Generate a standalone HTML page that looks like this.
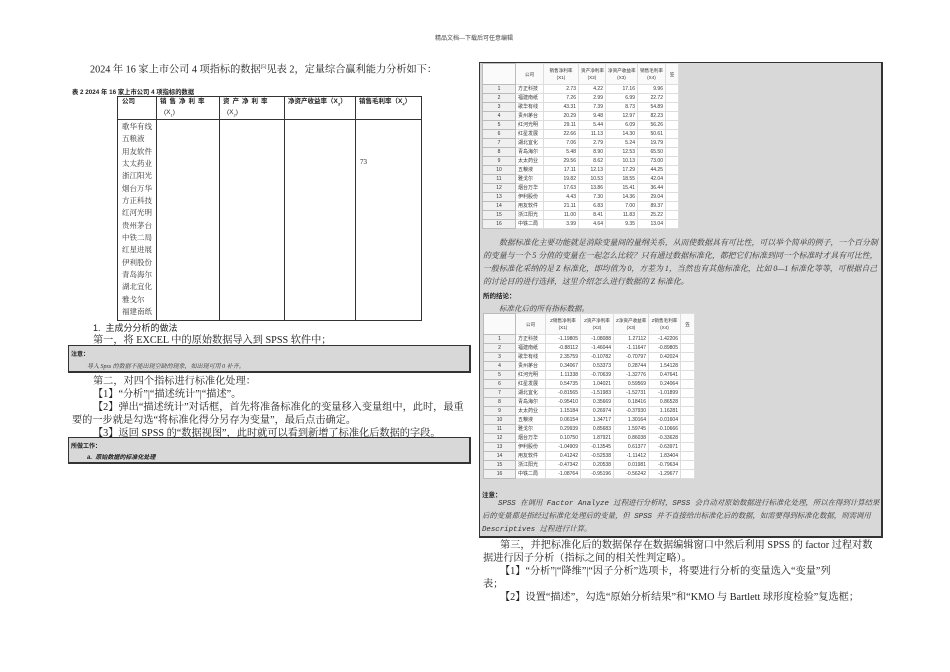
<!DOCTYPE html>
<html><head><meta charset="utf-8">
<style>
*{margin:0;padding:0;box-sizing:border-box}
body{width:950px;height:672px;background:#fff;position:relative;overflow:hidden;font-family:"Liberation Serif","Noto Serif CJK SC",serif;color:#222}
.a{position:absolute;white-space:nowrap}
.t{font-size:10.2px;line-height:13px}
.s{font-family:"Liberation Sans","Noto Sans CJK SC",sans-serif}
.vl{position:absolute;width:1px;background:#333}
.hd{position:absolute;font-family:"Liberation Sans","Noto Sans CJK SC",sans-serif;font-size:6.5px;font-weight:bold;line-height:12px;white-space:nowrap}
.box{position:absolute;background:#d8d8d8;border:1px solid #333;border-right:2px solid #333;border-bottom:2px solid #333}
.sp{position:absolute;background:#fff;font-family:"Liberation Sans","Noto Sans CJK SC",sans-serif;font-size:5px;color:#333}
.sp table{border-collapse:collapse;table-layout:fixed;width:100%}
.sp td{border:1px solid #ddd;height:9px;line-height:7px;padding:0 2px;text-align:right;white-space:nowrap;overflow:hidden}
.sp td.i{background:#f0f0f0;text-align:center;border-color:#bbb}
.sp td.c{text-align:left}
.sp tr.h td{height:21px;text-align:center;background:#fafafa;line-height:7px;font-size:4.6px}
.it{font-style:italic}
</style></head><body>
<div class="a s" style="left:435px;top:33px;font-size:6px;color:#444">精品文档---下载后可任意编辑</div>

<div class="a t" style="left:90px;top:61px">2024 年 16 家上市公司 4 项指标的数据<sup style="font-size:5px">[5]</sup>见表 2，定量综合赢利能力分析如下：</div>
<div class="a s" style="left:72px;top:87px;font-size:6.3px;font-weight:bold">表 2  2024 年 16 家上市公司 4 项指标的数据</div>

<div style="position:absolute;left:117px;top:96px;width:305px;height:225px;border:1px solid #333"></div>
<div style="position:absolute;left:117px;top:119px;width:305px;height:1px;background:#333"></div>
<div class="vl" style="left:156px;top:96px;height:225px"></div>
<div class="vl" style="left:219px;top:96px;height:225px"></div>
<div class="vl" style="left:284px;top:96px;height:225px"></div>
<div class="vl" style="left:355px;top:96px;height:225px"></div>
<div class="hd" style="left:122px;top:96px">公司</div>
<div class="hd" style="left:160px;top:96px;letter-spacing:3px">销售净利率</div>
<div class="hd" style="left:164px;top:107px;font-weight:normal">(X<sub style="font-size:4px">1</sub>)</div>
<div class="hd" style="left:223px;top:96px;letter-spacing:3px">资产净利率</div>
<div class="hd" style="left:227px;top:107px;font-weight:normal">(X<sub style="font-size:4px">2</sub>)</div>
<div class="hd" style="left:288px;top:96px">净资产收益率（X<sub style="font-size:4px">3</sub>）</div>
<div class="hd" style="left:359px;top:96px">销售毛利率（X<sub style="font-size:4px">4</sub>）</div>
<div class="a" style="left:122px;top:121px;font-size:7.5px;line-height:12.35px;color:#333">歌华有线<br>五粮液<br>用友软件<br>太太药业<br>浙江阳光<br>烟台万华<br>方正科技<br>红河光明<br>贵州茅台<br>中铁二局<br>红星进展<br>伊利股份<br>青岛海尔<br>湖北宜化<br>雅戈尔<br>福建南纸</div>
<div class="a" style="left:360px;top:158px;font-size:7px">73</div>

<div class="a s" style="left:93px;top:321px;font-size:9px">1.&nbsp; 主成分分析的做法</div>
<div class="a t" style="left:93px;top:334px">第一，将 EXCEL 中的原始数据导入到 SPSS 软件中；</div>
<div class="box" style="left:68px;top:345px;width:403px;height:28px"><div class="a s" style="left:2px;top:3px;font-size:6px;font-weight:bold">注意：</div><div class="a it" style="left:18px;top:15px;font-size:6px;color:#333">导入 Spss 的数据不能出现空缺的现象，如出现可用 0 补齐。</div></div>
<div class="a t" style="left:93px;top:375px">第二，对四个指标进行标准化处理：</div>
<div class="a t" style="left:93px;top:388px">【1】“分析”|“描述统计”|“描述”。</div>
<div class="a t" style="left:93px;top:401px">【2】弹出“描述统计”对话框，首先将准备标准化的变量移入变量组中，此时，最重</div>
<div class="a t" style="left:72px;top:414px">要的一步就是勾选“将标准化得分另存为变量”，最后点击确定。</div>
<div class="a t" style="left:93px;top:427px">【3】返回 SPSS 的“数据视图”，此时就可以看到新增了标准化后数据的字段。</div>
<div class="box" style="left:68px;top:437px;width:403px;height:27px"><div class="a s" style="left:2px;top:3px;font-size:6px;font-weight:bold">所做工作：</div><div class="a s it" style="left:18px;top:14px;font-size:6px;font-weight:bold">a.&nbsp; 原始数据的标准化处理</div></div>

<div class="box" style="left:479px;top:62px;width:404px;height:476px"></div>
<div class="sp" style="left:482px;top:63px;width:197px">
<table>
<col style="width:33px"><col style="width:28px"><col style="width:35px"><col style="width:27px"><col style="width:32px"><col style="width:28px"><col>
<tr class="h"><td class="i"></td><td>公司</td><td>销售净利率<br>(X1)</td><td>资产净利率<br>(X2)</td><td>净资产收益率<br>(X3)</td><td>销售毛利率<br>(X4)</td><td>笠</td></tr>
<tr><td class="i">1</td><td class="c">方正科技</td><td>2.73</td><td>4.22</td><td>17.16</td><td>9.96</td><td></td></tr>
<tr><td class="i">2</td><td class="c">福建南纸</td><td>7.26</td><td>2.99</td><td>6.99</td><td>22.72</td><td></td></tr>
<tr><td class="i">3</td><td class="c">歌华有线</td><td>43.31</td><td>7.39</td><td>8.73</td><td>54.89</td><td></td></tr>
<tr><td class="i">4</td><td class="c">贵州茅台</td><td>20.29</td><td>9.48</td><td>12.97</td><td>82.23</td><td></td></tr>
<tr><td class="i">5</td><td class="c">红河光明</td><td>29.11</td><td>5.44</td><td>6.09</td><td>56.26</td><td></td></tr>
<tr><td class="i">6</td><td class="c">红星发展</td><td>22.66</td><td>11.13</td><td>14.30</td><td>50.61</td><td></td></tr>
<tr><td class="i">7</td><td class="c">湖北宜化</td><td>7.06</td><td>2.79</td><td>5.24</td><td>19.79</td><td></td></tr>
<tr><td class="i">8</td><td class="c">青岛海尔</td><td>5.48</td><td>8.90</td><td>12.53</td><td>65.50</td><td></td></tr>
<tr><td class="i">9</td><td class="c">太太药业</td><td>29.56</td><td>8.62</td><td>10.13</td><td>73.00</td><td></td></tr>
<tr><td class="i">10</td><td class="c">五粮液</td><td>17.11</td><td>12.13</td><td>17.29</td><td>44.25</td><td></td></tr>
<tr><td class="i">11</td><td class="c">雅戈尔</td><td>19.82</td><td>10.53</td><td>18.55</td><td>42.04</td><td></td></tr>
<tr><td class="i">12</td><td class="c">烟台万华</td><td>17.63</td><td>13.86</td><td>15.41</td><td>36.44</td><td></td></tr>
<tr><td class="i">13</td><td class="c">伊利股份</td><td>4.43</td><td>7.30</td><td>14.36</td><td>29.04</td><td></td></tr>
<tr><td class="i">14</td><td class="c">用友软件</td><td>21.11</td><td>6.83</td><td>7.00</td><td>89.37</td><td></td></tr>
<tr><td class="i">15</td><td class="c">浙江阳光</td><td>11.00</td><td>8.41</td><td>11.83</td><td>25.22</td><td></td></tr>
<tr><td class="i">16</td><td class="c">中铁二局</td><td>3.99</td><td>4.64</td><td>9.35</td><td>13.04</td><td></td></tr>
</table></div>

<div class="a it" style="left:483px;top:236px;width:396px;white-space:normal;font-size:7.9px;line-height:13px;color:#333;text-indent:16px">数据标准化主要功能就是消除变量间的量纲关系，从而使数据具有可比性，可以举个简单的例子，一个百分制的变量与一个 5 分值的变量在一起怎么比较？只有通过数据标准化，都把它们标准到同一个标准时才具有可比性，一般标准化采纳的是 Z 标准化，即均值为 0，方差为 1，当然也有其他标准化，比如 0—1 标准化等等，可根据自己的讨论目的进行选择，这里介绍怎么进行数据的 Z 标准化。</div>
<div class="a s" style="left:483px;top:290px;font-size:6.5px;font-weight:bold">所的结论：</div>
<div class="a it" style="left:499px;top:303px;font-size:7.5px;color:#333">标准化后的所有指标数据。</div>
<div class="sp" style="left:483px;top:313px;width:212px">
<table>
<col style="width:32px"><col style="width:30px"><col style="width:35px"><col style="width:33px"><col style="width:35px"><col style="width:32px"><col>
<tr class="h"><td class="i"></td><td>公司</td><td>Z销售净利率<br>(X1)</td><td>Z资产净利率<br>(X2)</td><td>Z净资产收益率<br>(X3)</td><td>Z销售毛利率<br>(X4)</td><td>笠</td></tr>
<tr><td class="i">1</td><td class="c">方正科技</td><td>-1.19805</td><td>-1.08088</td><td>1.27112</td><td>-1.42206</td><td></td></tr>
<tr><td class="i">2</td><td class="c">福建南纸</td><td>-0.88112</td><td>-1.46044</td><td>-1.11647</td><td>-0.89805</td><td></td></tr>
<tr><td class="i">3</td><td class="c">歌华有线</td><td>2.35759</td><td>-0.10782</td><td>-0.70797</td><td>0.42024</td><td></td></tr>
<tr><td class="i">4</td><td class="c">贵州茅台</td><td>0.34067</td><td>0.53373</td><td>0.28744</td><td>1.54128</td><td></td></tr>
<tr><td class="i">5</td><td class="c">红河光明</td><td>1.11338</td><td>-0.70639</td><td>-1.32776</td><td>0.47641</td><td></td></tr>
<tr><td class="i">6</td><td class="c">红星发展</td><td>0.54735</td><td>1.04021</td><td>0.59569</td><td>0.24064</td><td></td></tr>
<tr><td class="i">7</td><td class="c">湖北宜化</td><td>-0.81565</td><td>-1.51983</td><td>-1.52731</td><td>-1.01899</td><td></td></tr>
<tr><td class="i">8</td><td class="c">青岛海尔</td><td>-0.95410</td><td>0.35669</td><td>0.18416</td><td>0.86528</td><td></td></tr>
<tr><td class="i">9</td><td class="c">太太药业</td><td>1.15184</td><td>0.26974</td><td>-0.37930</td><td>1.16281</td><td></td></tr>
<tr><td class="i">10</td><td class="c">五粮液</td><td>0.06154</td><td>1.34717</td><td>1.30164</td><td>-0.01604</td><td></td></tr>
<tr><td class="i">11</td><td class="c">雅戈尔</td><td>0.29939</td><td>0.85683</td><td>1.59745</td><td>-0.10666</td><td></td></tr>
<tr><td class="i">12</td><td class="c">烟台万华</td><td>0.10750</td><td>1.87921</td><td>0.86038</td><td>-0.33628</td><td></td></tr>
<tr><td class="i">13</td><td class="c">伊利股份</td><td>-1.04909</td><td>-0.13545</td><td>0.61377</td><td>-0.63971</td><td></td></tr>
<tr><td class="i">14</td><td class="c">用友软件</td><td>0.41242</td><td>-0.52538</td><td>-1.11412</td><td>1.83404</td><td></td></tr>
<tr><td class="i">15</td><td class="c">浙江阳光</td><td>-0.47342</td><td>0.20538</td><td>0.01981</td><td>-0.79634</td><td></td></tr>
<tr><td class="i">16</td><td class="c">中铁二局</td><td>-1.08764</td><td>-0.95196</td><td>-0.56242</td><td>-1.29677</td><td></td></tr>
</table></div>
<div class="a s" style="left:482px;top:489px;font-size:6.5px;font-weight:bold">注意：</div>
<div class="a it" style="left:482px;top:498px;width:398px;white-space:normal;font-size:7.4px;line-height:13px;color:#333;text-indent:16px;font-family:'Liberation Mono','Noto Serif CJK SC',monospace">SPSS 在调用 Factor Analyze 过程进行分析时，SPSS 会自动对原始数据进行标准化处理，所以在得到计算结果后的变量都是指经过标准化处理后的变量，但 SPSS 并不直接给出标准化后的数据，如需要得到标准化数据，则需调用 Descriptives 过程进行计算。</div>

<div class="a t" style="left:500px;top:539px">第三，并把标准化后的数据保存在数据编辑窗口中然后利用 SPSS 的 factor 过程对数</div>
<div class="a t" style="left:483px;top:552px">据进行因子分析（指标之间的相关性判定略）。</div>
<div class="a t" style="left:500px;top:565px">【1】“分析”|“降维”|“因子分析”选项卡，将要进行分析的变量选入“变量”列</div>
<div class="a t" style="left:483px;top:578px">表；</div>
<div class="a t" style="left:500px;top:591px">【2】设置“描述”，勾选“原始分析结果”和“KMO 与 Bartlett 球形度检验”复选框；</div>
</body></html>
